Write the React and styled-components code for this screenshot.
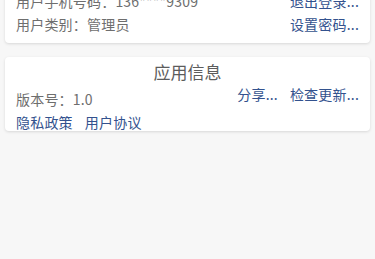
import React from 'react';
import styled, { createGlobalStyle } from 'styled-components';

const GlobalStyle = createGlobalStyle`
  html, body {
    margin: 0;
    padding: 0;
    background: #f7f7f7;
    font-family: "Noto Sans CJK SC", "Noto Sans", sans-serif;
  }
`;

const Page = styled.div`
  display: flex;
  flex-direction: column;
  gap: 14px;
  padding: 0 5px;
  margin-top: -15px;
  height: 274px;
  background: #f7f7f7;
  overflow: hidden;
`;

const Card = styled.div`
  background: #ffffff;
  border-radius: 4px;
  box-shadow: 0 1px 3px rgba(0, 0, 0, 0.13);
  padding: ${(p) => p.$padding || '0 11px'};
`;

const Row = styled.div`
  display: flex;
  justify-content: space-between;
  align-items: center;
  height: 23px;
  font-size: 14px;
`;

const Label = styled.span`
  color: #6e6e6e;
  letter-spacing: 0.2px;
`;

const Link = styled.span`
  color: #33528e;
  letter-spacing: 0.2px;
  cursor: pointer;
`;

const Title = styled.div`
  text-align: center;
  font-size: 17px;
  line-height: 22px;
  color: #5c5c5c;
`;

const Body = styled.div`
  display: flex;
  justify-content: space-between;
  align-items: flex-start;
  font-size: 14px;
`;

const Column = styled.div`
  display: flex;
  flex-direction: column;
  margin-top: ${(p) => p.$offset}px;
`;

const Line = styled.div`
  display: flex;
  gap: 12px;
  align-items: center;
  height: ${(p) => p.$h || 20}px;
  margin-top: ${(p) => p.$mt || 0}px;
`;

export default function App() {
  return (
    <>
      <GlobalStyle />
      <Page>
        <Card $padding="4px 11px 8px">
          <Row>
            <Label>用户手机号码：136****9309</Label>
            <Link>退出登录...</Link>
          </Row>
          <Row>
            <Label>用户类别：管理员</Label>
            <Link>设置密码...</Link>
          </Row>
        </Card>
        <Card $padding="4px 11px 0">
          <Title>应用信息</Title>
          <Body>
            <Column $offset={6}>
              <Line>
                <Label>版本号：1.0</Label>
              </Line>
              <Line $h={19} $mt={3}>
                <Link>隐私政策</Link>
                <Link>用户协议</Link>
              </Line>
            </Column>
            <Column $offset={1}>
              <Line>
                <Link>分享...</Link>
                <Link>检查更新...</Link>
              </Line>
            </Column>
          </Body>
        </Card>
      </Page>
    </>
  );
}
